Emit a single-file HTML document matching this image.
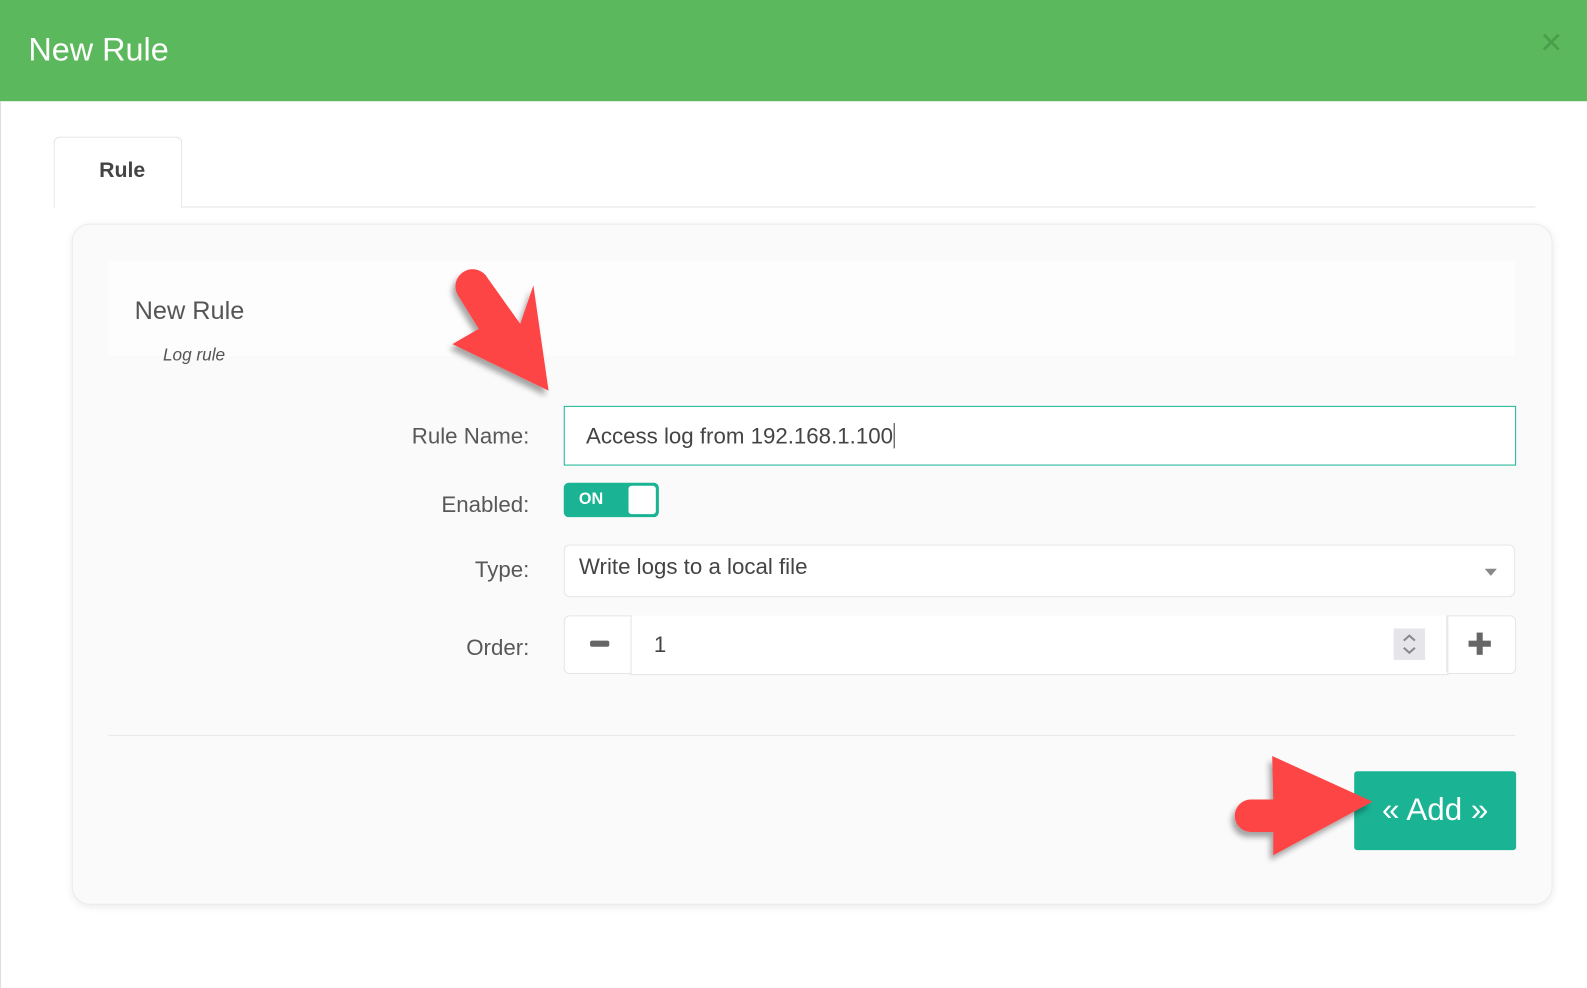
<!DOCTYPE html>
<html><head><style>
body{margin:0;width:1587px;height:976px;background:#fff;font-family:"Liberation Sans",sans-serif;position:relative;overflow:hidden;color:#555}
#w{position:absolute;left:0;top:0;width:1568px;height:964px;transform:scale(1.0121);transform-origin:0 0}
.a{position:absolute}
.lbl{position:absolute;right:1045px;font-size:22px;color:#585858;text-align:right}
</style></head><body><div id="w">
<div class="a" style="left:0;top:0;width:1568px;height:100px;background:#5cb85c"></div>
<div class="a" style="left:28px;top:31px;font-size:32px;color:#fff">New Rule</div>
<div class="a" style="left:1521px;top:26px;font-size:28px;color:#3f8f3f;opacity:.6">✕</div>
<div class="a" style="left:0;top:100px;width:1px;height:876px;background:#ddd"></div>
<div class="a" style="left:53px;top:204px;width:1464px;height:1px;background:#e3e3e3"></div>
<div class="a" style="left:53px;top:135px;width:125px;height:70px;border:1px solid #e3e3e3;border-bottom:none;border-radius:6px 6px 0 0;background:#fff"></div>
<div class="a" style="left:98px;top:157px;font-size:21px;font-weight:bold;color:#444">Rule</div>
<div class="a" style="left:71px;top:221px;width:1461px;height:671px;background:#fafafa;border:1px solid #ececec;border-radius:18px;box-shadow:0 2px 8px rgba(0,0,0,.08)"></div>
<div class="a" style="left:107px;top:258px;width:1390px;height:94px;background:#fdfdfd"></div>
<div class="a" style="left:133px;top:293px;font-size:25px;color:#555">New Rule</div>
<div class="a" style="left:161px;top:341px;font-size:17px;font-style:italic;color:#555">Log rule</div>
<div class="lbl" style="top:418px">Rule Name:</div>
<div class="lbl" style="top:486px">Enabled:</div>
<div class="lbl" style="top:550px">Type:</div>
<div class="lbl" style="top:627px">Order:</div>
<div class="a" style="left:557px;top:401px;width:939px;height:57px;border:1px solid #1ab394;background:#fff"></div>
<div class="a" style="left:579px;top:418px;font-size:22px;color:#444">Access log from 192.168.1.100<span style="border-left:1px solid #333;margin-left:1px"></span></div>
<div class="a" style="left:557px;top:477px;width:94px;height:34px;background:#1ab394;border-radius:5px"></div>
<div class="a" style="left:572px;top:485px;font-size:16px;font-weight:bold;color:#fff">ON</div>
<div class="a" style="left:621px;top:480px;width:27px;height:28px;background:#fff;border-radius:3px"></div>
<div class="a" style="left:557px;top:538px;width:938px;height:50px;border:1px solid #e5e5e5;border-radius:6px;background:#fff"></div>
<div class="a" style="left:572px;top:547px;font-size:22px;color:#444">Write logs to a local file</div>
<div class="a" style="left:1467px;top:562px;width:0;height:0;border-left:6px solid transparent;border-right:6px solid transparent;border-top:7px solid #888"></div>
<div class="a" style="left:557px;top:608px;width:939px;height:56px;border:1px solid #e5e5e5;border-radius:6px;background:#fff"></div>
<div class="a" style="left:623px;top:608px;width:806px;height:58px;border:1px solid #e5e5e5;border-top:none;background:#fff"></div>
<div class="a" style="left:623px;top:608px;width:1px;height:58px;background:#e5e5e5"></div>
<div class="a" style="left:1429px;top:608px;width:1px;height:56px;background:#e5e5e5"></div>
<div class="a" style="left:583px;top:633px;width:19px;height:6px;background:#666;border-radius:2px"></div>
<div class="a" style="left:1451px;top:633px;width:22px;height:6px;background:#666"></div>
<div class="a" style="left:1459px;top:625px;width:6px;height:22px;background:#666"></div>
<div class="a" style="left:646px;top:624px;font-size:22px;color:#444">1</div>
<div class="a" style="left:1377px;top:621px;width:31px;height:31px;background:#e6e6ea"></div>
<svg class="a" style="left:1377px;top:621px" width="31" height="31"><path d="M10 12l5.5-5 5.5 5M10 19l5.5 5 5.5-5" fill="none" stroke="#888" stroke-width="2"/></svg>
<div class="a" style="left:107px;top:726px;width:1390px;height:1px;background:#e6e6e6"></div>
<div class="a" style="left:1338px;top:762px;width:160px;height:78px;background:#1ab394;border-radius:3px"></div>
<div class="a" style="left:1338px;top:782px;width:160px;text-align:center;font-size:31px;color:#fff">« Add »</div>
<svg class="a" style="left:0;top:0" width="1587" height="976">
<defs><filter id="s"><feDropShadow dx="-3" dy="5" stdDeviation="3" flood-opacity=".35"/></filter></defs>
<g fill="#fd4444" filter="url(#s)">
<path d="M452 291a17 17 0 0 1 30-16L514 320L527 282L542 386L447 340L473 325Z"/>
<path d="M1257 747L1356 792L1258 845L1258 822L1236 822a16 16 0 0 1 0-32L1258 790Z"/>
</g></svg>
</div></body></html>
